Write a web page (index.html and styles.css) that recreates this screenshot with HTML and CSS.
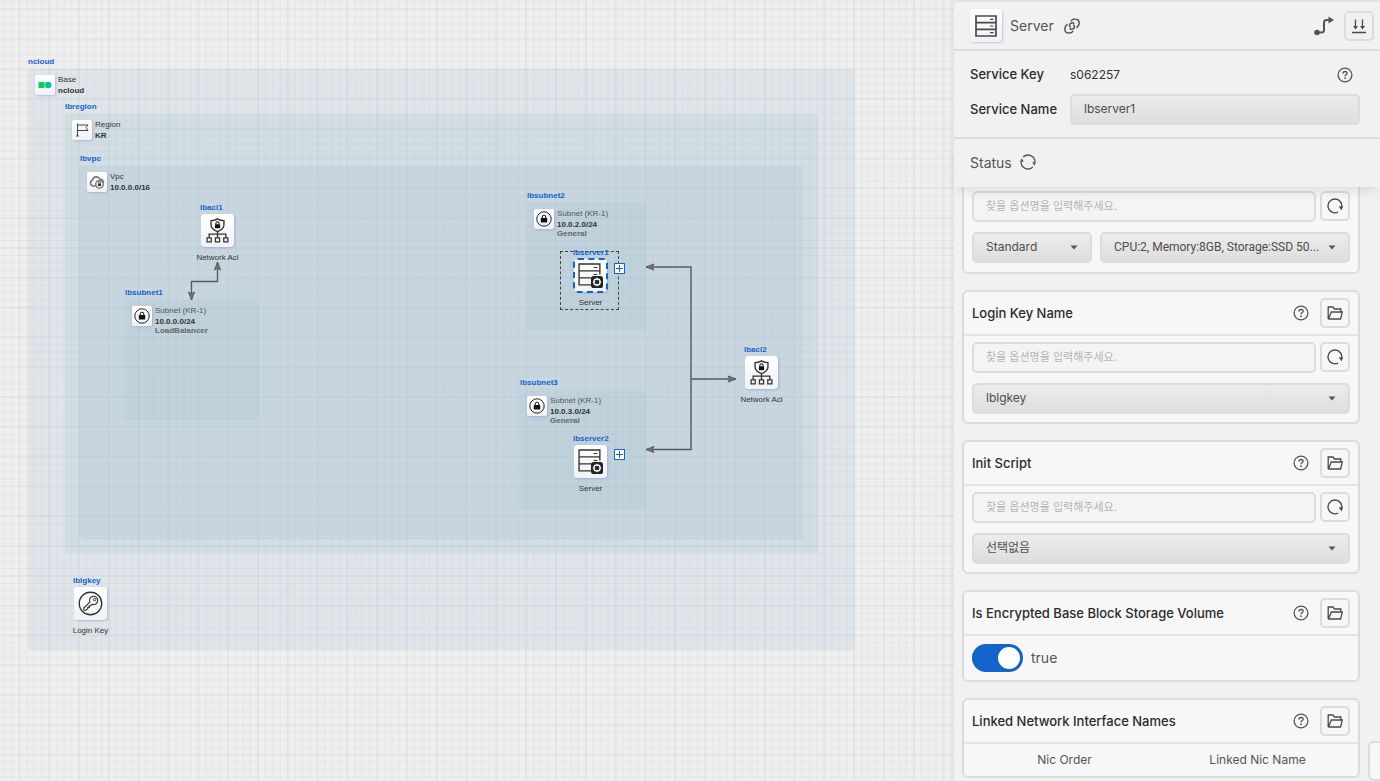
FILE: index.html
```html
<!DOCTYPE html>
<html lang="ko">
<head>
<meta charset="utf-8">
<title>ncloud designer</title>
<link rel="stylesheet" href="styles.css">
</head>
<body>
<svg class="defs" aria-hidden="true">
  <symbol id="i-help" viewBox="0 0 16 16"><circle cx="8" cy="8" r="6.9" fill="none" stroke="currentColor" stroke-width="1.3"/><path d="M6 6.6C6 5.2 7 4.5 8.1 4.5S10.100 5.200 10.100 6.300C10.100 7.800 8 7.700 8 9.200" fill="none" stroke="currentColor" stroke-width="1.4"/><circle cx="8" cy="11.200" r=".9" fill="currentColor"/></symbol>
  <symbol id="i-folder" viewBox="0 0 16 16"><path d="M1.200 14V2H6L7.500 4H13.800V6.500M1.200 14H13.600L15.300 7H4.300L1.500 14" fill="none" stroke="currentColor" stroke-width="1.3"/></symbol>
  <symbol id="i-reload" viewBox="0 0 16 16"><path d="M11.200 14A6.900 6.900 0 1 1 14.600 9.700" fill="none" stroke="currentColor" stroke-width="1.400"/><path d="M11.700 8.300L15.900 8.600L14.600 12.500Z" fill="currentColor"/></symbol>
  <symbol id="i-server" viewBox="0 0 24 24"><path d="M2 2H22V22H2ZM2 8.700H22M2 15.300H22" fill="none" stroke="currentColor" stroke-width="1.700"/><path d="M16 5.400H19.500M16 12H19.500M16 18.700H19.500" stroke="currentColor" stroke-width="1.200"/></symbol>
  <symbol id="i-serverset" viewBox="0 0 24 24"><path d="M12.500 21H1V1H21V11M1 7.600H21M1 14.300H13" fill="none" stroke="currentColor" stroke-width="1.300"/><path d="M15 4.400H18.500M15 11H18.500" stroke="currentColor"/><rect x="12.500" y="12.500" width="11.500" height="11.500" rx="2.500" fill="#222"/><circle cx="18.250" cy="18.250" r="3" fill="none" stroke="#fff" stroke-width="1.200"/><path d="M18.250 14.200V16.500M18.250 20V22.300M14.200 18.250H16.500M20 18.250H22.300M15.400 15.400L16.500 16.500M20 20L21.100 21.100M15.400 21.100L16.500 20M20 16.500L21.100 15.400" stroke="#fff" stroke-width="1"/></symbol>
  <symbol id="i-acl" viewBox="0 0 24 24"><path d="M12 .8C9.800 2.200 8 2.500 5.800 2.500V6.500C5.800 9.800 8.500 11.800 12 13C15.500 11.800 18.200 9.800 18.200 6.500V2.500C16 2.500 14.200 2.200 12 .8ZM12 13V19M4 19V15.500H20V19" fill="none" stroke="currentColor" stroke-width="1.300"/><path d="M2 19H6V23H2ZM10 19H14V23H10ZM18 19H22V23H18Z" fill="none" stroke="currentColor" stroke-width="1.200"/><rect x="9.500" y="6" width="5" height="3.800" fill="#111"/><path d="M10.500 6V5A1.500 1.500 0 0 1 13.500 5V6" fill="none" stroke="#111"/></symbol>
  <symbol id="i-lock" viewBox="0 0 16 16"><circle cx="8" cy="8" r="7.200" fill="none" stroke="#222"/><rect x="4.800" y="7" width="6.400" height="4.500" fill="#111"/><path d="M6.200 7V6A1.800 1.800 0 0 1 9.800 6V7" fill="none" stroke="#111"/></symbol>
  <symbol id="i-key" viewBox="0 0 26 26"><circle cx="13" cy="13" r="11.700" fill="none" stroke="currentColor" stroke-width="1.400"/><path d="M12.300 11.500A4.300 4.300 0 1 1 14.700 13.800L13.200 15.200L11.700 15.300V17H10.200V18.500L7.700 20.200L6 19.700V17.700Z" fill="none" stroke="currentColor" stroke-width="1.200"/><circle cx="17.300" cy="9" r="1.300" fill="none" stroke="currentColor" stroke-width="1"/></symbol>
  <symbol id="i-caret" viewBox="0 0 8 5"><path d="M.5 .5H7.500L4 4.500Z" fill="currentColor"/></symbol>
</svg>

<main class="canvas">
  <svg class="grid" aria-hidden="true">
    <defs>
      <pattern id="cells" width="40" height="40" patternUnits="userSpaceOnUse" patternTransform="translate(19.500 9.500) scale(.7452)">
        <path d="M10 0V40M20 0V40M30 0V40M0 10H40M0 20H40M0 30H40" stroke="#e5e5e5" stroke-width="1.300"/>
        <path d="M0 0V40M40 0V40M0 0H40M0 40H40" stroke="#d8d9da" stroke-width="1.300"/>
      </pattern>
    </defs>
    <rect width="100%" height="100%" fill="url(#cells)"/>
  </svg>

  <div class="zone zone-base"></div>
  <div class="zone zone-region"></div>
  <div class="zone zone-vpc"></div>
  <div class="zone zone-subnet1"></div>
  <div class="zone zone-subnet2"></div>
  <div class="zone zone-subnet3"></div>

  <svg class="grid edges" aria-hidden="true">
    <defs><marker id="tip" viewBox="0 0 10 8" markerWidth="10" markerHeight="8" refX="9" refY="4" orient="auto-start-reverse" markerUnits="userSpaceOnUse"><path d="M1 1L9 4L1 7L3 4Z" fill="#777" stroke="#595959"/></marker></defs>
    <path d="M217.500 262V281.500H191.500V300" marker-start="url(#tip)" marker-end="url(#tip)"/>
    <path d="M646 267H691V449.500H646" marker-start="url(#tip)" marker-end="url(#tip)"/>
    <path d="M691 379H736" marker-end="url(#tip)"/>
  </svg>

  <section class="group group-base"><b class="tag">ncloud</b><div class="head"><span class="tile"><svg viewBox="0 0 16 16"><defs><linearGradient id="nc"><stop offset="0" stop-color="#0c6"/><stop offset="1" stop-color="#00c4c4"/></linearGradient></defs><rect x="1.500" y="5" width="6" height="6" fill="#08cf5d"/><circle cx="11.200" cy="8" r="3.300" fill="url(#nc)"/></svg></span><p>Base<b>ncloud</b></p></div></section>
  <section class="group group-region"><b class="tag">lbregion</b><div class="head"><span class="tile"><svg viewBox="0 0 16 16"><path d="M3.500 1.500V14M2 14H5M3.500 3H14L12 5.500L14 8.500H4" fill="none" stroke="#444"/></svg></span><p>Region<b>KR</b></p></div></section>
  <section class="group group-vpc"><b class="tag">lbvpc</b><div class="head"><span class="tile"><svg viewBox="0 0 16 16"><path d="M7 12H4A3 3 0 0 1 3.500 6.200A4 4 0 0 1 11 5Q14.500 5.500 14.500 9" fill="none" stroke="#777" stroke-width="1.600"/><circle cx="10.500" cy="10.300" r="3.800" fill="#eee" stroke="#777" stroke-width="1.400"/><rect x="9" y="9.500" width="3" height="2.500" fill="#333"/><path d="M9.500 9.500V9A1 1 0 0 1 11.500 9V9.500" fill="none" stroke="#333" stroke-width=".8"/></svg></span><p>Vpc<b>10.0.0.0/16</b></p></div></section>
  <section class="group subnet group-subnet1"><b class="tag">lbsubnet1</b><div class="head"><span class="tile"><svg><use href="#i-lock"/></svg></span><p>Subnet (KR-1)<b>10.0.0.0/24</b><i>LoadBalancer</i></p></div></section>
  <section class="group subnet group-subnet2"><b class="tag">lbsubnet2</b><div class="head"><span class="tile"><svg><use href="#i-lock"/></svg></span><p>Subnet (KR-1)<b>10.0.2.0/24</b><i>General</i></p></div></section>
  <section class="group subnet group-subnet3"><b class="tag">lbsubnet3</b><div class="head"><span class="tile"><svg><use href="#i-lock"/></svg></span><p>Subnet (KR-1)<b>10.0.3.0/24</b><i>General</i></p></div></section>

  <div class="selection"></div>
  <div class="node node-acl1"><b class="tag">lbacl1</b><span class="tile tile-lg"><svg><use href="#i-acl"/></svg></span><span>Network Acl</span></div>
  <div class="node node-acl2"><b class="tag">lbacl2</b><span class="tile tile-lg"><svg><use href="#i-acl"/></svg></span><span>Network Acl</span></div>
  <div class="node node-server1"><b class="tag">lbserver1</b><span class="tile tile-lg tile-active"><svg><use href="#i-serverset"/></svg></span><span>Server</span></div>
  <div class="node node-server2"><b class="tag">lbserver2</b><span class="tile tile-lg"><svg><use href="#i-serverset"/></svg></span><span>Server</span></div>
  <div class="node node-key"><b class="tag">lblgkey</b><span class="tile tile-lg"><svg><use href="#i-key"/></svg></span><span>Login Key</span></div>
  <button class="add add-server1" aria-label="Add to lbserver1"></button>
  <button class="add add-server2" aria-label="Add to lbserver2"></button>
</main>

<aside class="panel">
  <header class="panel-head">
    <span class="tile tile-lg"><svg><use href="#i-server"/></svg></span>
    <h1>Server</h1>
    <svg class="icon link" viewBox="0 0 16 16"><path d="M6.800 3.200C8 1.300 9.500 .8 11 .9C13.500 1 15.200 2.800 15.200 5.100C15.200 7.300 14 8.600 12.500 9.800M10.300 5.800C9.300 4.500 7.500 4.400 6.300 5.600C5 7 5.500 8.600 6.800 9.300M9.200 12.800C8 14.700 6.500 15.200 5 15.100C2.500 15 .8 13.200 .8 10.900C.8 8.700 2 7.400 3.500 6.200M5.700 10.200C6.700 11.500 8.500 11.600 9.700 10.400C11 9 10.500 7.400 9.200 6.700" fill="none" stroke="currentColor" stroke-width="1.500"/></svg>
    <svg class="icon route" viewBox="0 0 20 20"><circle cx="3" cy="16.500" r="2.800" fill="currentColor"/><path d="M3 16.500H7.500Q10 16.500 10 14V6.500Q10 4 12.500 4H16" fill="none" stroke="currentColor" stroke-width="2"/><path d="M14.500 .5L20 4L14.500 7.500Z" fill="currentColor"/></svg>
    <button class="square" aria-label="Collapse all"><svg viewBox="0 0 16 16"><path d="M4.500 1.500V10M11.500 1.500V10M1 14.500H15" stroke="currentColor" stroke-width="1.300"/><path d="M2 8H7L4.500 11.500ZM9 8H14L11.500 11.500Z" fill="currentColor"/></svg></button>
  </header>

  <section class="service">
    <div class="row"><span class="name">Service Key</span><span class="value">s062257</span><svg class="icon help"><use href="#i-help"/></svg></div>
    <div class="row"><label class="name" for="svc">Service Name</label><input class="field filled" id="svc" value="lbserver1"></div>
  </section>

  <section class="status"><h2>Status</h2><svg class="icon" viewBox="0 0 16 16"><path d="M3.200 3A6.900 6.900 0 0 1 14.900 8.300M12.800 13A6.900 6.900 0 0 1 1.100 7.700" fill="none" stroke="currentColor" stroke-width="1.400"/><path d="M12.200 8.300L16 8.300L14.300 11.800ZM0 7.700L3.800 7.700L1.700 4.200Z" fill="currentColor"/></svg></section>

  <div class="cards">
    <section class="card card-cut">
      <div class="card-body">
        <div class="search"><input class="field" aria-label="서버 검색" placeholder="찾을 옵션명을 입력해주세요."><button class="square" aria-label="Reload"><svg><use href="#i-reload"/></svg></button></div>
        <div class="pair">
          <div class="pick"><select class="field filled" aria-label="Type"><option>Standard</option></select><svg><use href="#i-caret"/></svg></div>
          <div class="pick"><select class="field filled spec" aria-label="Spec"><option>CPU:2, Memory:8GB, Storage:SSD 50...</option></select><svg><use href="#i-caret"/></svg></div>
        </div>
      </div>
    </section>
    <section class="card">
      <div class="card-head"><label for="key">Login Key Name</label><svg class="icon"><use href="#i-help"/></svg><button class="square" aria-label="Open"><svg><use href="#i-folder"/></svg></button></div>
      <div class="card-body">
        <div class="search"><input class="field" aria-label="Login Key 검색" placeholder="찾을 옵션명을 입력해주세요."><button class="square" aria-label="Reload"><svg><use href="#i-reload"/></svg></button></div>
        <div class="pick"><select class="field filled" id="key"><option>lblgkey</option></select><svg><use href="#i-caret"/></svg></div>
      </div>
    </section>
    <section class="card">
      <div class="card-head"><label for="script">Init Script</label><svg class="icon"><use href="#i-help"/></svg><button class="square" aria-label="Open"><svg><use href="#i-folder"/></svg></button></div>
      <div class="card-body">
        <div class="search"><input class="field" aria-label="Init Script 검색" placeholder="찾을 옵션명을 입력해주세요."><button class="square" aria-label="Reload"><svg><use href="#i-reload"/></svg></button></div>
        <div class="pick"><select class="field filled" id="script"><option>선택없음</option></select><svg><use href="#i-caret"/></svg></div>
      </div>
    </section>
    <section class="card">
      <div class="card-head"><h3>Is Encrypted Base Block Storage Volume</h3><svg class="icon"><use href="#i-help"/></svg><button class="square" aria-label="Open"><svg><use href="#i-folder"/></svg></button></div>
      <div class="card-body card-toggle"><input class="toggle" type="checkbox" id="enc" checked><label for="enc">true</label></div>
    </section>
    <section class="card">
      <div class="card-head"><h3>Linked Network Interface Names</h3><svg class="icon"><use href="#i-help"/></svg><button class="square" aria-label="Open"><svg><use href="#i-folder"/></svg></button></div>
      <table><thead><tr><th>Nic Order</th><th>Linked Nic Name</th></tr></thead></table>
    </section>
  </div>
  <div class="drawer-tab"></div>
</aside>
</body>
</html>
```

FILE: styles.css
```css
* { box-sizing: border-box; }
body {
  margin: 0;
  height: 100vh;
  display: flex;
  overflow: hidden;
  background: #efefef;
  color: #555;
  font-family: Inter, "Noto Sans CJK KR", sans-serif;
  font-size: 14px;
}
.defs { position: absolute; width: 0; height: 0; }
h1, h2, h3, p { margin: 0; font-weight: 400; font-size: 14px; }
button { padding: 0; font: inherit; color: inherit; }

/* Canvas */
.canvas {
  position: relative;
  flex: 1;
  overflow: hidden;
  color: #333;
  font-family: "Liberation Sans", Arial, sans-serif;
  font-size: 8px;
  line-height: 11px;
  white-space: nowrap;
}
.grid { position: absolute; inset: 0; width: 100%; height: 100%; }
.edges > path { fill: none; stroke: #595959; stroke-width: 1.4; }
.zone { position: absolute; background: rgba(162, 190, 208, .2); border-radius: 4px; }
.zone-base { left: 28px; top: 69px; width: 827px; height: 581px; }
.zone-region { left: 65px; top: 114px; width: 753px; height: 439px; }
.zone-vpc { left: 79px; top: 166px; width: 724px; height: 373px; }
.zone-subnet1 { left: 125px; top: 300px; width: 134px; height: 120px; }
.zone-subnet2 { left: 527px; top: 203px; width: 119px; height: 127px; }
.zone-subnet3 { left: 520px; top: 391px; width: 126px; height: 118px; }
.zone-subnet1, .zone-subnet2, .zone-subnet3 { background: rgba(162, 194, 204, .2); }

.tag { color: #1264ca; line-height: 10px; }
.tile {
  display: flex;
  align-items: center;
  justify-content: center;
  flex: none;
  width: 20px;
  height: 20px;
  border-radius: 2px;
  background: linear-gradient(#fff, #f1f2f4);
  box-shadow: 1px 1px 2px rgba(120, 130, 220, .4);
}
.tile svg { width: 16px; height: 16px; color: #333; }
.tile-lg { width: 33px; height: 33px; border-radius: 4px; }
.tile-lg svg { width: 25px; height: 25px; }
.tile-active { outline: 2px dashed #1264ca; outline-offset: -1px; }

.group, .node { position: absolute; display: flex; flex-direction: column; align-items: flex-start; }
.head { display: flex; gap: 3px; margin: 8px 0 0 7px; }
.head p { margin-top: -1px; font-size: 8px; line-height: 11px; }
.head b, .head i { display: block; font-style: normal; }
.head i { color: #666; font-weight: 700; line-height: 8px; }
.group-base { left: 28px; top: 57px; }
.group-region { left: 65px; top: 102px; }
.group-vpc { left: 80px; top: 154px; }
.subnet p { color: #555; }
.subnet p b { color: #333; }
.group-subnet1 { left: 125px; top: 288px; }
.group-subnet2 { left: 527px; top: 191px; }
.group-subnet3 { left: 520px; top: 378px; }

.node { width: 33px; }
.node .tag { margin-left: -1px; }
.node .tile { margin: 1px 0 6px; }
.node > span:last-child { align-self: center; line-height: 10px; }
.node-acl1 { left: 201px; top: 203px; }
.node-acl2 { left: 745px; top: 345px; }
.node-server1 { left: 574px; top: 248px; }
.node-server2 { left: 574px; top: 434px; }
.node-key { left: 74px; top: 576px; }
.selection { position: absolute; left: 560px; top: 251px; width: 59px; height: 59px; border: 1px dashed #444; }
.add {
  position: absolute;
  left: 614px;
  width: 11px;
  height: 11px;
  border: 1px solid #1264ca;
  background:
    linear-gradient(#1264ca, #1264ca) center / 7px 1px no-repeat,
    linear-gradient(#1264ca, #1264ca) center / 1px 7px no-repeat,
    #fff;
}
.add-server1 { top: 263px; }
.add-server2 { top: 449px; }

/* Side panel */
.panel {
  position: relative;
  display: flex;
  flex-direction: column;
  width: 426px;
  border-top: 2px solid #e3e3e3;
  background: #f1f1f1;
  box-shadow: 0 0 5px rgba(0, 0, 0, .12);
}
.icon { flex: none; width: 16px; height: 16px; color: #555; }
.square {
  display: flex;
  align-items: center;
  justify-content: center;
  flex: none;
  width: 30px;
  height: 30px;
  border: 2px solid #dcdcdc;
  border-radius: 5px;
  background: transparent;
}
.square svg { width: 16px; height: 16px; color: #4a4a4a; }
.panel-head {
  display: flex;
  align-items: center;
  gap: 10px;
  height: 49px;
  padding: 0 6px 0 16px;
  border-bottom: 2px solid #dcdcdc;
}
.panel-head .tile-lg { width: 32px; margin-right: -2px; }
.panel-head .tile-lg svg { width: 24px; height: 24px; color: #4a4a4a; }
.route { width: 20px; height: 20px; margin-left: auto; }
.service {
  display: flex;
  flex-direction: column;
  gap: 4px;
  padding: 8px 20px 12px 16px;
  border-bottom: 2px solid #dcdcdc;
}
.row { display: flex; align-items: center; height: 31px; }
.name { width: 100px; flex: none; padding-bottom: 2px; color: #2b2b2b; font-size: 13px; font-weight: 500; }
.value { flex: 1; color: #333; font-size: 12px; }
.help { margin-right: 7px; }
.status {
  position: relative;
  z-index: 1;
  display: flex;
  align-items: center;
  gap: 8px;
  height: 48px;
  padding: 0 16px 2px;
  background: #f1f1f1;
  box-shadow: 0 8px 10px -4px rgba(0, 0, 0, .1);
}

.field {
  width: 100%;
  min-width: 0;
  height: 31px;
  padding: 0 12px 2px;
  border: 2px solid #dcdcdc;
  border-radius: 5px;
  background: #f4f4f4;
  color: #4d4d4d;
  font: inherit;
  font-size: 12px;
  appearance: none;
}
.field::placeholder { color: #b5b5b5; font-size: 11px; }
.filled { background: linear-gradient(#ececec, #dedede); }
select.field { padding-right: 8px; }
.spec { font-family: Roboto, Inter, sans-serif; }

.cards {
  display: flex;
  flex: 1;
  flex-direction: column;
  gap: 16px;
  min-height: 0;
  overflow: hidden;
  padding: 0 20px 0 8px;
}
.card { flex: none; border: 2px solid #dcdcdc; border-radius: 6px; background: #f7f7f7; }
.card-cut { border-top: 0; border-radius: 0 0 6px 6px; }
.card-head {
  display: flex;
  align-items: center;
  gap: 11px;
  height: 44px;
  padding: 0 8px;
  border-bottom: 2px solid #e4e4e4;
  color: #2b2b2b;
}
.card-head > :first-child { flex: 1; font-size: 13px; font-weight: 500; }
.card-body { display: flex; flex-direction: column; gap: 10px; padding: 6px 8px 8px; }
.card-cut .card-body { padding-top: 4px; }
.search { display: flex; align-items: flex-start; gap: 4px; }
.pair { display: grid; grid-template-columns: 120px 1fr; gap: 8px; }
.pick { position: relative; display: flex; }
.pick svg { position: absolute; right: 14px; top: 13px; width: 8px; height: 5px; }
.card-cut .card-body { padding-bottom: 9px; }
.card-toggle { flex-direction: row; align-items: center; gap: 8px; padding-top: 8px; }
.card-toggle label { padding-bottom: 2px; }
.toggle {
  appearance: none;
  width: 51px;
  height: 28px;
  margin: 0;
  padding: 3px;
  border-radius: 14px;
  background: #1264ca;
}
.toggle::before {
  content: "";
  display: block;
  width: 22px;
  height: 22px;
  margin-left: auto;
  border-radius: 50%;
  background: #fff;
}
table { width: 100%; padding: 0 4px; border-spacing: 0; table-layout: fixed; }
th { height: 32px; padding: 0 0 2px; font-size: 12px; font-weight: 400; }
.drawer-tab {
  position: absolute;
  right: 0;
  bottom: 0;
  width: 12px;
  height: 40px;
  border: 2px solid #dcdcdc;
  border-width: 2px 0 2px 2px;
  border-radius: 6px 0 0 6px;
  background: #f7f7f7;
}
```
